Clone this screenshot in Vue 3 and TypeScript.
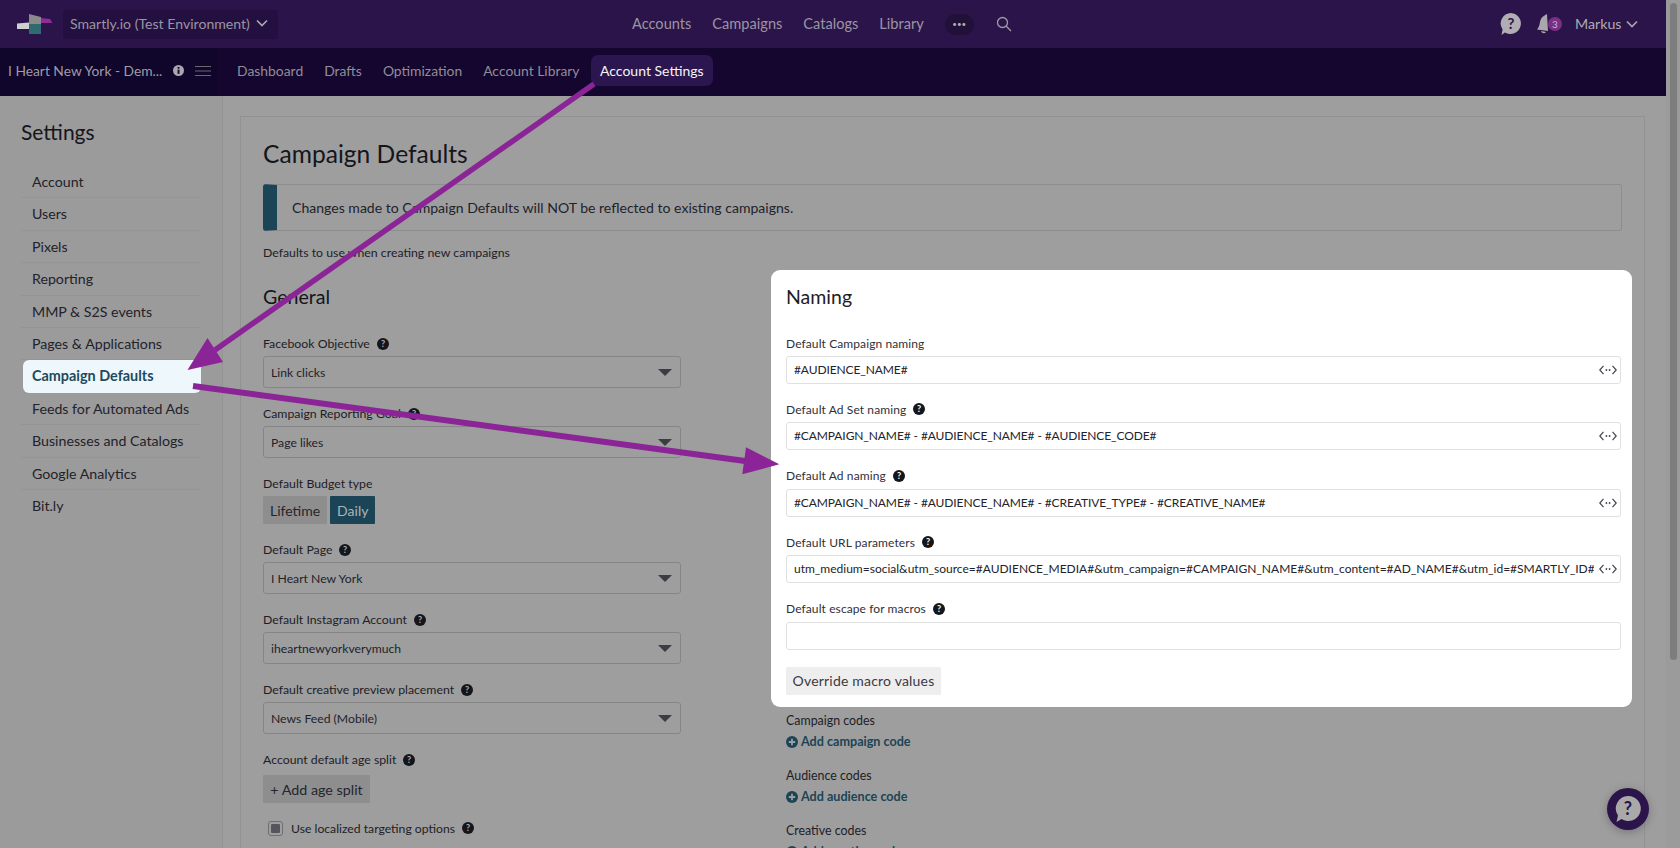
<script setup lang="ts">
const topNav = ['Accounts', 'Campaigns', 'Catalogs', 'Library']
const subNav = ['Dashboard', 'Drafts', 'Optimization', 'Account Library']
const sideItems = ['Account', 'Users', 'Pixels', 'Reporting', 'MMP & S2S events', 'Pages & Applications', 'Campaign Defaults', 'Feeds for Automated Ads', 'Businesses and Catalogs', 'Google Analytics', 'Bit.ly']
const selectsA = [
  { label: 'Facebook Objective', value: 'Link clicks', help: true },
  { label: 'Campaign Reporting Goal', value: 'Page likes', help: true },
]
const selectsB = [
  { label: 'Default Page', value: 'I Heart New York', help: true },
  { label: 'Default Instagram Account', value: 'iheartnewyorkverymuch', help: true },
  { label: 'Default creative preview placement', value: 'News Feed (Mobile)', help: true },
]
const codes = [
  { label: 'Campaign codes', add: 'Add campaign code' },
  { label: 'Audience codes', add: 'Add audience code' },
  { label: 'Creative codes', add: 'Add creative code' },
]
const namings = [
  { label: 'Default Campaign naming', value: '#AUDIENCE_NAME#', help: false, macro: true, url: false },
  { label: 'Default Ad Set naming', value: '#CAMPAIGN_NAME# - #AUDIENCE_NAME# - #AUDIENCE_CODE#', help: true, macro: true, url: false },
  { label: 'Default Ad naming', value: '#CAMPAIGN_NAME# - #AUDIENCE_NAME# - #CREATIVE_TYPE# - #CREATIVE_NAME#', help: true, macro: true, url: false },
  { label: 'Default URL parameters', value: 'utm_medium=social&utm_source=#AUDIENCE_MEDIA#&utm_campaign=#CAMPAIGN_NAME#&utm_content=#AD_NAME#&utm_id=#SMARTLY_ID#', help: true, macro: true, url: true },
  { label: 'Default escape for macros', value: '', help: true, macro: false, url: false },
]
</script>

<template>
  <div class="page">
    <div class="main">
      <header class="topbar">
        <svg class="logo" width="36" height="20" viewBox="0 0 36 20">
          <path d="M0 9.5 L12 8.5 L12 15 L0 15 Z" fill="#cfcfcf" />
          <path d="M12 0 L24 3 L24 10 L12 10 Z" fill="#8a8a8a" />
          <path d="M12 10 L24 10 L24 20 L12 20 Z" fill="#2f6a72" />
          <path d="M24 4 L33 5 L35 8 L35 9 L24 9 Z" fill="#8f2a96" />
        </svg>
        <div class="account-select">
          <span>Smartly.io (Test Environment)</span>
          <svg class="chev" width="12" height="8" viewBox="0 0 12 8"><path d="M1 1.5 L6 6.5 L11 1.5" /></svg>
        </div>
        <nav class="topnav">
          <a v-for="n in topNav" :key="n">{{ n }}</a>
          <span class="dots">•••</span>
          <svg class="search" width="16" height="16" viewBox="0 0 16 16"><circle cx="6.5" cy="6.5" r="5" /><path d="M10.3 10.3 L15 15" /></svg>
        </nav>
        <div class="top-right">
          <svg width="22" height="24" viewBox="0 0 22 24"><path d="M11 1 A10.5 10.5 0 1 1 5 20.5 L1.5 23 L2.6 17.5 A10.5 10.5 0 0 1 11 1 Z" fill="#b0aeb3" /><text x="11" y="16.5" text-anchor="middle" class="qm">?</text></svg>
          <div class="bell">
            <svg width="16" height="22" viewBox="0 0 16 22"><path d="M11 1 L12 18 L1 16.5 C4 13 3.5 10 4.5 7 C5.5 4 8 2.5 11 1 Z M5 18 C6 20.5 8.5 21 10 19 Z" fill="#a9a7ac" /></svg>
            <span class="badge">3</span>
          </div>
          <span class="user">Markus</span>
          <svg class="chev" width="12" height="8" viewBox="0 0 12 8"><path d="M1 1.5 L6 6.5 L11 1.5" /></svg>
        </div>
      </header>

      <div class="subbar">
        <div class="sub-left">
          <span class="acc-name">I Heart New York - Dem...</span>
          <svg width="11" height="11" viewBox="0 0 11 11"><circle cx="5.5" cy="5.5" r="5.5" fill="#a9a7ac" /><rect x="4.6" y="4.6" width="1.9" height="4.2" fill="#14062e" /><rect x="4.6" y="2" width="1.9" height="1.7" fill="#14062e" /></svg>
          <svg class="burger" width="16" height="12" viewBox="0 0 16 12"><path d="M0 1.5 H16 M0 6 H16 M0 10.5 H16" /></svg>
        </div>
        <nav class="subnav">
          <a v-for="n in subNav" :key="n">{{ n }}</a>
          <a class="active">Account Settings</a>
        </nav>
      </div>

      <div class="body">
        <aside class="side">
          <h2>Settings</h2>
          <ul>
            <li v-for="s in sideItems" :key="s" :class="{ sel: s === 'Campaign Defaults' }">{{ s }}</li>
          </ul>
        </aside>

        <section class="panel">
          <h1>Campaign Defaults</h1>
          <div class="alert"><span>Changes made to Campaign Defaults will NOT be reflected to existing campaigns.</span></div>
          <p class="intro">Defaults to use when creating new campaigns</p>
          <div class="cols">
            <div class="col-left">
              <h3>General</h3>
              <div v-for="f in selectsA" :key="f.label" class="field">
                <label>{{ f.label }}<svg class="help" viewBox="0 0 12 12"><circle cx="6" cy="6" r="6" /><text x="6" y="9.4" text-anchor="middle">?</text></svg></label>
                <div class="select"><span>{{ f.value }}</span><i class="caret"></i></div>
              </div>
              <div class="field">
                <label>Default Budget type</label>
                <div class="toggle"><button>Lifetime</button><button class="on">Daily</button></div>
              </div>
              <div v-for="f in selectsB" :key="f.label" class="field">
                <label>{{ f.label }}<svg class="help" viewBox="0 0 12 12"><circle cx="6" cy="6" r="6" /><text x="6" y="9.4" text-anchor="middle">?</text></svg></label>
                <div class="select"><span>{{ f.value }}</span><i class="caret"></i></div>
              </div>
              <div class="field age">
                <label>Account default age split<svg class="help" viewBox="0 0 12 12"><circle cx="6" cy="6" r="6" /><text x="6" y="9.4" text-anchor="middle">?</text></svg></label>
                <button class="add-age">+ Add age split</button>
              </div>
              <div class="check">
                <span class="box"><i></i></span>
                <span>Use localized targeting options</span>
                <svg class="help" viewBox="0 0 12 12"><circle cx="6" cy="6" r="6" /><text x="6" y="9.4" text-anchor="middle">?</text></svg>
              </div>
            </div>
            <div class="col-right">
              <div v-for="c in codes" :key="c.label" class="code">
                <div class="code-label">{{ c.label }}</div>
                <div class="code-add">
                  <svg width="12" height="12" viewBox="0 0 12 12"><circle cx="6" cy="6" r="6" fill="#1b4456" /><path d="M6 2.8 V9.2 M2.8 6 H9.2" stroke="#9e9e9e" stroke-width="1.8" /></svg>
                  {{ c.add }}
                </div>
              </div>
            </div>
          </div>
        </section>
      </div>
    </div>

    <div class="scrollbar"><div class="thumb"></div></div>

    <div class="modal">
      <h3>Naming</h3>
      <div v-for="n in namings" :key="n.label" class="m-field">
        <label>{{ n.label }}<svg v-if="n.help" class="help" viewBox="0 0 12 12"><circle cx="6" cy="6" r="6" /><text x="6" y="9.4" text-anchor="middle">?</text></svg></label>
        <div class="m-input">
          <span class="m-text" :class="{ url: n.url }">{{ n.value }}</span>
          <svg v-if="n.macro" class="macro" width="18" height="10" viewBox="0 0 18 10"><path d="M4.5 .8 L.8 5 L4.5 9.2 M13.5 .8 L17.2 5 L13.5 9.2" /><circle cx="7.4" cy="5" r=".9" /><circle cx="10.6" cy="5" r=".9" /></svg>
        </div>
      </div>
      <button class="override">Override macro values</button>
    </div>

    <svg class="arrows" width="1680" height="848" viewBox="0 0 1680 848">
      <path d="M594 84 L215 350" stroke="#8b2496" stroke-width="5.5" fill="none" />
      <path d="M187.5 370 L207.5 338 L223 362 Z" fill="#8b2496" />
      <path d="M193 386 L745 461" stroke="#8b2496" stroke-width="6" fill="none" />
      <path d="M779.3 464.3 L746 447.3 L742.3 474.3 Z" fill="#8b2496" />
    </svg>

    <div class="fab">
      <svg width="26" height="28" viewBox="0 0 26 28"><path d="M13 1 A12.5 12.5 0 1 1 6.5 24 L1.5 27 L3 20.5 A12.5 12.5 0 0 1 13 1 Z" fill="#a9a9a9" /><text x="13" y="19.5" text-anchor="middle">?</text></svg>
    </div>
  </div>
</template>

<style>
html, body { margin: 0; background: #9e9e9e; overflow: hidden; }
</style>

<style scoped>
.page { position: relative; width: 1680px; height: 848px; overflow: hidden; display: flex; font-family: Lato, "Open Sans", sans-serif; color: #1d1d26; background: #9e9e9e; }
.main { width: 1666px; flex: none; display: flex; flex-direction: column; }
.scrollbar { flex: 1; background: #9b9b9b; padding: 0 0 0 4px; }
.thumb { width: 7px; height: 657px; background: #7d7d7d; border-radius: 4px; margin-top: 3px; }

.topbar { height: 48px; flex: none; background: #2b144a; display: flex; align-items: center; position: relative; box-sizing: border-box; padding-left: 17px; }
.logo { flex: none; }
.account-select { margin-left: 10px; height: 29px; width: 215px; box-sizing: border-box; background: #241040; border-radius: 3px; display: flex; align-items: center; padding-left: 7px; padding-bottom: 2px; gap: 6px; color: #9b95a3; font-size: 14.1px; white-space: nowrap; }
.chev { fill: none; stroke: #a9a7ac; stroke-width: 1.7; flex: none; }
.topnav { position: absolute; left: 632px; top: 0; height: 46px; display: flex; align-items: center; gap: 21px; color: #9b95a3; font-size: 14.6px; }
.dots { width: 29px; height: 21px; border-radius: 11px; background: #211038; color: #b0aeb3; font-size: 8px; display: flex; align-items: center; justify-content: center; margin-top: 2px; }
.search { fill: none; stroke: #a09ca6; stroke-width: 1.3; margin-left: 1px; margin-top: 2px; }
.top-right { position: absolute; left: 1500px; top: 0; height: 48px; display: flex; align-items: center; color: #aeacb2; font-size: 14px; }
.qm { font: bold 15px Lato, sans-serif; fill: #2b144a; }
.bell { display: flex; align-items: center; margin-left: 14px; position: relative; }
.badge { width: 14px; height: 14px; border-radius: 50%; background: #7b2e86; color: #bbb; font-size: 10px; display: flex; align-items: center; justify-content: center; margin-left: -4px; }
.user { margin-left: 13px; margin-right: 5px; padding-bottom: 2px; font-size: 14.2px; }

.subbar { height: 48px; flex: none; background: #14062e; display: flex; align-items: stretch; }
.sub-left { width: 218px; flex: none; background: #10052a; display: flex; align-items: center; box-sizing: border-box; padding-left: 8px; padding-bottom: 3px; color: #9f9ca6; font-size: 13.8px; white-space: nowrap; }
.acc-name { width: 165px; flex: none; }
.burger { fill: none; stroke: #6a6672; stroke-width: 1.2; margin-left: 11px; }
.subnav { display: flex; align-items: center; margin-left: 19px; padding-bottom: 3px; gap: 21px; color: #918d99; font-size: 13.9px; }
.subnav .active { color: #f4f4f6; background: #2b1650; height: 31px; display: flex; align-items: center; padding: 0 9.5px; border-radius: 7px; margin-left: -10px; font-size: 14px; }

.body { flex: 1; display: flex; min-height: 0; }
.side { width: 223px; flex: none; box-sizing: border-box; background: #9b9b9b; border-right: 1px solid #949494; padding: 23px 21px 0 21px; }
.side h2 { margin: 0; font-size: 21px; font-weight: 400; line-height: 26px; color: #15151c; }
.side ul { list-style: none; padding: 0; margin: 21px 0 0; }
.side li { height: 32.4px; box-sizing: border-box; line-height: 31px; padding-left: 11px; font-size: 14.2px; border-bottom: 1px solid #949494; color: #22222a; white-space: nowrap; }
.side li:last-child { border-bottom: 0; }
.side li.sel { background: #eef7fb; color: #1d4a5c; font-weight: 700; border-radius: 6px; border-bottom: 0; margin-left: 2px; padding-left: 9px; font-size: 14.4px; }

.panel { flex: 1; margin: 20px 21px 0 17px; border: 1px solid #929292; border-bottom: 0; padding: 0 22px; min-width: 0; box-sizing: border-box; }
.panel h1 { margin: 21px 0 0; font-size: 24.6px; font-weight: 400; line-height: 32px; color: #15151c; }
.alert { margin-top: 14px; height: 47px; box-sizing: border-box; border: 1px solid #8d8d8d; border-left: 14px solid #1b4456; border-radius: 3px; display: flex; align-items: center; padding-left: 15px; padding-bottom: 1px; font-size: 14.05px; color: #22222a; }
.intro { margin: 13px 0 0; font-size: 12.3px; line-height: 18px; color: #1d1d26; }
.cols { display: flex; gap: 105px; }
.col-left { width: 418px; flex: none; }
.col-left h3 { margin: 23px 0 0; font-size: 19.6px; font-weight: 400; line-height: 24px; color: #15151c; }
.col-left h3 + .field { margin-top: 26px; }
.field { margin-bottom: 17px; }
.field label { display: flex; align-items: center; font-size: 12.3px; line-height: 18px; height: 18px; margin-bottom: 3px; color: #1d1d26; white-space: nowrap; }
.help { width: 12px; height: 12px; margin-left: 7px; fill: #15151c; flex: none; }
.help text { font: bold 9px Lato, sans-serif; fill: #b0b0b0; }
.select { height: 32px; box-sizing: border-box; border: 1px solid #858585; border-radius: 3px; display: flex; align-items: center; justify-content: space-between; padding: 0 8px 0 7px; font-size: 12.2px; color: #22222a; }
.caret { width: 0; height: 0; border-left: 7px solid transparent; border-right: 7px solid transparent; border-top: 7px solid #3c3c42; }
.toggle { display: flex; gap: 3px; }
.toggle button, .add-age { height: 28px; border: 0; background: #8e8e8e; color: #25252c; padding: 0 7px; font: 14px Lato, sans-serif; border-radius: 1px; }
.toggle .on { background: #1b4456; color: #a9b5ba; }
.field.age { margin-bottom: 16px; }
.field.age label { margin-bottom: 6px; }
.add-age { width: 107px; white-space: nowrap; font-size: 14.3px; }
.check { display: flex; align-items: center; font-size: 12.2px; margin-left: 5px; height: 18px; }
.box { width: 15px; height: 15px; box-sizing: border-box; border: 1px solid #6e6e6e; border-radius: 3px; display: flex; align-items: center; justify-content: center; margin-right: 8px; }
.box i { width: 9px; height: 9px; background: #55555f; border-radius: 1px; }
.col-right { flex: 1; min-width: 0; margin-top: 451px; }
.code { margin-bottom: 18px; }
.code-label { font-size: 12.4px; line-height: 16px; color: #1d1d26; }
.code-add { font-size: 12.6px; font-weight: 700; color: #1b4456; display: flex; align-items: center; gap: 3px; margin-top: 5px; line-height: 16px; }

.modal { position: absolute; left: 771px; top: 270px; width: 861px; height: 437px; box-sizing: border-box; background: #fff; border-radius: 9px; padding: 13px 11px 0 15px; color: #30303a; }
.modal h3 { margin: 0; font-size: 19.5px; font-weight: 400; line-height: 28px; color: #1d1d26; height: 52px; }
.m-field { margin-bottom: 17.4px; }
.m-field label { display: flex; align-items: center; height: 18px; box-sizing: border-box; padding-bottom: 2px; font-size: 12px; margin-bottom: 3px; letter-spacing: .1px; }
.m-input { height: 28px; box-sizing: border-box; border: 1px solid #e0e0e0; border-radius: 3px; display: flex; align-items: center; justify-content: space-between; padding: 0 3px 0 7px; }
.m-text { font-size: 12px; letter-spacing: -.1px; padding-bottom: 1px; white-space: nowrap; overflow: hidden; flex: 1; min-width: 0; color: #23232b; }
.m-text.url { letter-spacing: 0; }
.macro { flex: none; margin-left: 5px; }
.macro path { fill: none; stroke: #44444e; stroke-width: 1.2; }
.macro circle { fill: #44444e; }
.override { display: block; margin-top: 0; width: 155px; height: 28px; border: 0; background: #eeeeee; border-radius: 1px; font: 14px Lato, sans-serif; letter-spacing: .2px; color: #3a3a44; padding: 0; white-space: nowrap; }
.modal .help text { fill: #fff; }

.arrows { position: absolute; left: 0; top: 0; pointer-events: none; }
.fab { position: absolute; left: 1607px; top: 788px; width: 42px; height: 42px; border-radius: 50%; background: #2b144a; display: flex; align-items: center; justify-content: center; box-shadow: 0 2px 8px rgba(0,0,0,.25); }
.fab text { font: bold 18px Lato, sans-serif; fill: #2b144a; }
</style>
